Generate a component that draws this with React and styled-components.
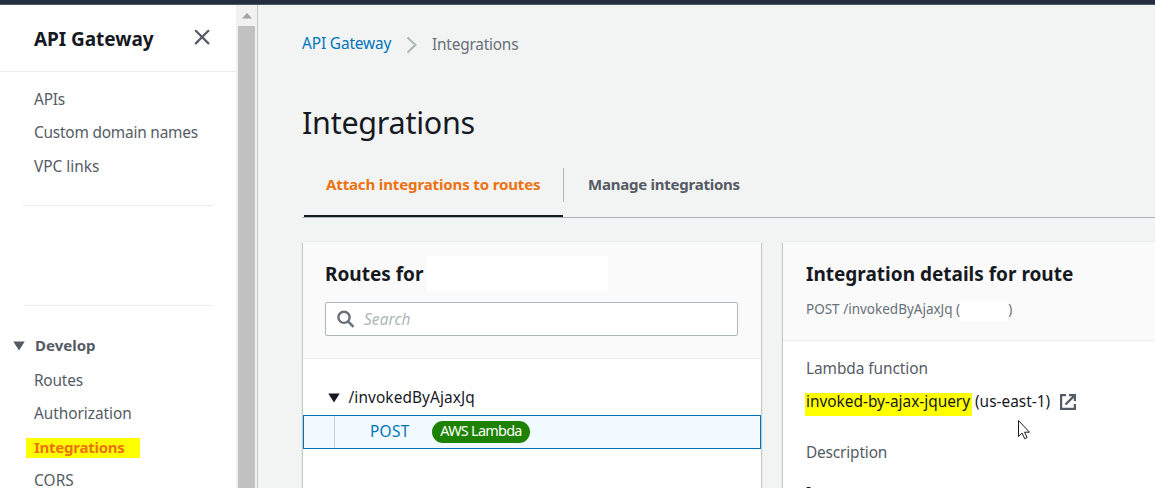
import React from 'react';
import styled, { createGlobalStyle, css } from 'styled-components';

const GlobalStyle = createGlobalStyle`
  * { box-sizing: border-box; }
  html, body { margin: 0; padding: 0; overflow: hidden; }
  body {
    font-family: "Noto Sans", "Open Sans", sans-serif;
    font-size: 15.4px;
    color: #16191f;
    background: #f2f3f3;
  }
  h1, h2, p, ul { margin: 0; padding: 0; font-weight: 400; }
`;

const type = css`
  font-size: ${(p) => p.$size || 15.4}px;
  letter-spacing: ${(p) => p.$track || 0}px;
  white-space: nowrap;
`;

const Page = styled.div`
  height: 488px;
  display: flex;
  flex-direction: column;
  overflow: hidden;
`;
const TopBar = styled.div`
  flex: none;
  height: 5px;
  background: #232f3e;
  border-bottom: 1px solid #4d5763;
`;
const Body = styled.div`
  flex: 1;
  min-height: 0;
  display: flex;
`;

const Sidebar = styled.nav`
  width: 236px;
  flex: none;
  background: #fff;
  overflow: hidden;
`;
const SideHeader = styled.div`
  height: 67px;
  padding: 0 26px 0 34px;
  display: flex;
  align-items: center;
  justify-content: space-between;
  border-bottom: 1px solid #eaeded;
  svg { margin-bottom: 2px; }
`;
const SideTitle = styled.h2`
  ${type}
  font-weight: 700;
  line-height: 26px;
  padding-top: 2px;
`;
const NavList = styled.ul`
  list-style: none;
  padding-top: ${(p) => p.$top}px;
  padding-left: 34px;
`;
const NavItem = styled.li`
  ${type}
  height: 33.3px;
  line-height: 33.3px;
  color: #545b64;
`;
const ActiveItem = styled.span`
  ${type}
  display: inline-block;
  vertical-align: top;
  width: 114px;
  height: 20px;
  line-height: 18px;
  margin: 7px 0 0 -8px;
  padding-left: 8px;
  background: #ff0;
  color: #ec7211;
  font-weight: 700;
`;
const Rule = styled.div`
  height: 1px;
  margin: ${(p) => p.$top}px 23px 0;
  background: #eaeded;
`;
const Section = styled.div`
  ${type}
  display: flex;
  align-items: center;
  gap: 10px;
  height: 34px;
  margin-top: 22px;
  padding-left: 13px;
  font-weight: 700;
  color: #545b64;
  svg { margin-top: 2px; }
`;

const ScrollTrack = styled.div`
  width: 22px;
  flex: none;
  display: flex;
  flex-direction: column;
  padding: 0 2px 0 2px;
  background: #f1f1f1;
  border-right: 1px solid #c3c7c9;
`;
const ScrollUp = styled.div`
  height: 21px;
  display: flex;
  align-items: center;
  justify-content: center;
`;
const ScrollThumb = styled.div`
  flex: 1;
  width: 17px;
  background: #c1c1c1;
`;

const Main = styled.main`
  flex: 1;
  min-width: 0;
  padding-left: 44px;
  overflow: hidden;
`;
const Crumbs = styled.div`
  display: flex;
  align-items: center;
  height: 24px;
  margin-top: 26px;
`;
const Crumb = styled.span`
  ${type}
  color: ${(p) => (p.$link ? '#0073bb' : '#687078')};
  width: ${(p) => p.$w}px;
  padding-top: ${(p) => (p.$link ? 0 : 2)}px;
`;
const CrumbArrow = styled.svg`
  margin: 3px 14px 0 0;
  flex: none;
`;
const PageTitle = styled.h1`
  ${type}
  line-height: 44px;
  margin-top: 45px;
`;
const Tabs = styled.div`
  display: flex;
  height: 50px;
  margin-top: 24px;
  border-bottom: 1px solid #aab7b8;
`;
const Tab = styled.div`
  ${type}
  height: 49px;
  line-height: 33px;
  font-weight: 700;
  color: ${(p) => (p.$active ? '#ec7211' : '#545b64')};
  ${(p) => p.$active ? css`
    width: 259px;
    margin-left: 2px;
    padding-left: 22px;
    border-bottom: 2px solid #16191f;
  ` : css`
    padding-left: 24px;
  `}
`;
const TabDivider = styled.div`
  width: 1px;
  height: 34px;
  background: #aab7b8;
`;
const Panels = styled.div`
  display: flex;
  gap: 22px;
  margin-top: 24px;
  padding-left: 1px;
`;
const Panel = styled.section`
  flex: none;
  width: ${(p) => p.$w}px;
  height: 300px;
  background: #fff;
  box-shadow: 0 1px 1px 0 rgba(0, 28, 36, 0.3), 1px 1px 1px 0 rgba(0, 28, 36, 0.15),
    -1px 1px 1px 0 rgba(0, 28, 36, 0.15), 0 -1px 0 0 #eaeded;
`;
const PanelHeader = styled.div`
  height: ${(p) => p.$h}px;
  padding: 13px 23px 0;
  background: #fafafa;
  border-bottom: 1px solid #eaeded;
`;
const TitleRow = styled.div`
  display: flex;
  align-items: center;
  height: 36px;
`;
const PanelTitle = styled.h2`
  ${type}
  font-weight: 700;
  line-height: 34px;
  padding-top: 2px;
  margin-left: ${(p) => (p.$w ? -1 : 0)}px;
  width: ${(p) => (p.$w ? p.$w + 'px' : 'auto')};
`;
const Redacted = styled.span`
  display: inline-block;
  flex: none;
  width: ${(p) => p.$w}px;
  height: ${(p) => p.$h}px;
  background: #fff;
`;
const SearchBox = styled.div`
  display: flex;
  align-items: center;
  gap: 9px;
  height: 34px;
  width: 413px;
  margin: 11px 0 0 -1px;
  padding-left: 11px;
  background: #fff;
  border: 1px solid #aab7b8;
  border-radius: 2px;
`;
const Placeholder = styled.span`
  ${type}
  font-style: italic;
  color: #aab7b8;
`;
const RouteGroup = styled.div`
  ${type}
  display: flex;
  align-items: center;
  gap: 8.5px;
  height: 36px;
  margin-top: 20px;
  padding-left: 25px;
  svg { margin-top: 1px; }
`;
const RouteRow = styled.div`
  display: flex;
  height: 34px;
  align-items: center;
  background: #f1faff;
  border: 1px solid #0073bb;
`;
const TreeLine = styled.span`
  width: 1px;
  height: 32px;
  margin-left: 30px;
  background: #c8d0d3;
`;
const Method = styled.span`
  ${type}
  width: 62px;
  margin-left: 35px;
  padding-bottom: 1px;
  color: #0073bb;
`;
const Badge = styled.span`
  ${type}
  width: 98px;
  height: 22px;
  line-height: 20px;
  text-align: center;
  border-radius: 11px;
  background: #1d8102;
  color: #fff;
`;
const SubTitle = styled.div`
  ${type}
  display: flex;
  align-items: center;
  height: 20px;
  margin-top: 10px;
  color: #687078;
`;
const SubText = styled.span`
  padding-bottom: 4px;
`;
const Details = styled.div`
  padding: 15px 23px 0;
`;
const DetailLabel = styled.p`
  ${type}
  line-height: 26px;
  color: #545b64;
  margin-top: ${(p) => p.$top || 0}px;
`;
const DetailValue = styled.div`
  ${type}
  display: flex;
  align-items: flex-start;
  height: 23px;
  line-height: 17px;
  margin-top: ${(p) => p.$top}px;
  svg { margin-top: 1px; }
`;
const Highlight = styled.mark`
  ${type}
  width: 167px;
  height: 23px;
  margin-left: -1px;
  padding-left: 1px;
  background: #ff0;
  color: inherit;
`;
const Region = styled.span`
  ${type}
  width: 88px;
  padding-left: 3px;
`;
const Pointer = styled.svg`
  position: absolute;
  left: 1017px;
  top: 419px;
`;

const Caret = ({ color }) => (
  <svg width="12" height="10" viewBox="0 0 12 10">
    <path d="M0.3 0.5h11.4L6 9.5z" fill={color} />
  </svg>
);

export default function App() {
  return (
    <Page>
      <GlobalStyle />
      <TopBar />
      <Body>
        <Sidebar>
          <SideHeader>
            <SideTitle $size={19} $track={-0.05}>API Gateway</SideTitle>
            <svg width="16" height="16" viewBox="0 0 16 16" fill="none" stroke="#545b64" strokeWidth="2.2" strokeLinecap="round">
              <path d="M1.8 1.8l12.6 12.6M14.4 1.8L1.8 14.4" />
            </svg>
          </SideHeader>
          <NavList $top={11.2}>
            <NavItem $track={-0.2}>APIs</NavItem>
            <NavItem $track={-0.2}>Custom domain names</NavItem>
            <NavItem>VPC links</NavItem>
          </NavList>
          <Rule $top={21.9} />
          <Rule $top={99} />
          <Section $size={15}>
            <Caret color="#545b64" />
            Develop
          </Section>
          <NavList $top={2.1}>
            <NavItem $track={-0.2}>Routes</NavItem>
            <NavItem $track={-0.05}>Authorization</NavItem>
            <NavItem><ActiveItem $size={15} $track={-0.25}>Integrations</ActiveItem></NavItem>
            <NavItem $track={0.1}>CORS</NavItem>
          </NavList>
        </Sidebar>
        <ScrollTrack>
          <ScrollUp>
            <svg width="10" height="6" viewBox="0 0 10 6"><path d="M0 5.5L5 0l5 5.5z" fill="#a3a3a3" /></svg>
          </ScrollUp>
          <ScrollThumb />
        </ScrollTrack>
        <Main>
          <Crumbs>
            <Crumb $link $w={104} $track={-0.13}>API Gateway</Crumb>
            <CrumbArrow width="12" height="18" viewBox="0 0 12 18" fill="none" stroke="#aab7b8" strokeWidth="2">
              <path d="M1.5 1.5L9.5 9l-8 7.5" />
            </CrumbArrow>
            <Crumb $track={-0.21}>Integrations</Crumb>
          </Crumbs>
          <PageTitle $size={30.5} $track={-0.26}>Integrations</PageTitle>
          <Tabs>
            <Tab $active $size={15} $track={-0.13}>Attach integrations to routes</Tab>
            <TabDivider />
            <Tab $size={15} $track={-0.24}>Manage integrations</Tab>
          </Tabs>
          <Panels>
            <Panel $w={458}>
              <PanelHeader $h={117}>
                <TitleRow>
                  <PanelTitle $size={19} $w={102}>Routes for</PanelTitle>
                  <Redacted $w={181} $h={35} />
                </TitleRow>
                <SearchBox>
                  <svg width="18" height="18" viewBox="0 0 18 18" fill="none" stroke="#687078" strokeWidth="2.4">
                    <circle cx="7" cy="7.3" r="5.6" />
                    <path d="M11 11.3L16.5 16.8" />
                  </svg>
                  <Placeholder $track={0.1}>Search</Placeholder>
                </SearchBox>
              </PanelHeader>
              <RouteGroup $track={0.1}>
                <Caret color="#16191f" />
                /invokedByAjaxJq
              </RouteGroup>
              <RouteRow>
                <TreeLine />
                <Method $track={0.3}>POST</Method>
                <Badge $size={14.4} $track={-0.7}>AWS Lambda</Badge>
              </RouteRow>
            </Panel>
            <Panel $w={460}>
              <PanelHeader $h={99}>
                <TitleRow>
                  <PanelTitle $size={19}>Integration details for route</PanelTitle>
                </TitleRow>
                <SubTitle $size={13.5}>
                  <SubText>POST /invokedByAjaxJq (</SubText>
                  <Redacted $w={48} $h={20} />
                  <SubText>)</SubText>
                </SubTitle>
              </PanelHeader>
              <Details>
                <DetailLabel $track={-0.05}>Lambda function</DetailLabel>
                <DetailValue $top={11}>
                  <Highlight>invoked-by-ajax-jquery</Highlight>
                  <Region>(us-east-1)</Region>
                  <svg width="16" height="16" viewBox="0 0 16 16" fill="none" stroke="#545b64" strokeWidth="2.2">
                    <path d="M6 1.1H1.1v13.8h13.8V10M9 1.1h5.9V7M14.9 1.1L5.5 10.5" />
                  </svg>
                </DetailValue>
                <DetailLabel $top={24} $track={-0.15}>Description</DetailLabel>
                <DetailValue $top={12}>-</DetailValue>
              </Details>
            </Panel>
          </Panels>
        </Main>
      </Body>
      <Pointer width="14" height="22" viewBox="0 0 14 22">
        <path d="M1.5 1.5v16l3.6-3.4 2.6 5.6 2.4-1.1-2.5-5.4h4.9z" fill="#fff" stroke="#16191f" strokeWidth="1" />
      </Pointer>
    </Page>
  );
}
